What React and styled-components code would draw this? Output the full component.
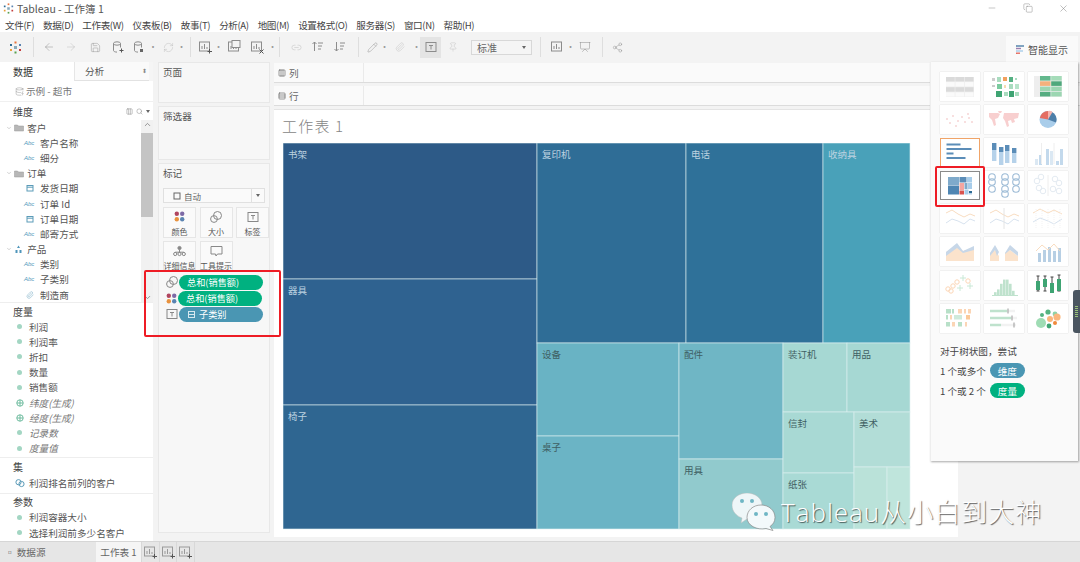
import React from 'react';
import styled, { createGlobalStyle, css } from 'styled-components';
import { ArrowLeft, ArrowRight, Save, DatabaseZap, RefreshCw, Pin, Share2, Presentation, Minus, Copy, X, ChevronDown, ChevronUp, Search, Paperclip, Pencil, Link2, Columns3, Rows3 } from 'lucide-react';

const FONT = `"Noto Sans CJK SC", "Noto Sans", sans-serif`;

const Global = createGlobalStyle`
  html, body { margin: 0; padding: 0; background: #fff; }
  * { box-sizing: border-box; }
  body { font-family: ${FONT}; font-size: 10px; color: #444; }
`;

const Page = styled.div`
  position: relative; width: 1080px; height: 562px; overflow: hidden;
  display: flex; flex-direction: column; background: #fff;
`;
const TitleBar = styled.div`
  height: 17px; display: flex; align-items: center; padding-left: 3px; gap: 3px; font-size: 10.5px; color: #555;
`;
const WinButtons = styled.div`
  margin-left: auto; display: flex; width: 93px; color: #777; justify-content: space-between; padding-right: 11px;
`;
const MenuBar = styled.div`
  height: 15px; display: flex; align-items: center; padding-left: 5px; gap: 9px; font-size: 9.6px; letter-spacing: -.4px; color: #444; white-space: nowrap;
`;
const Toolbar = styled.div`
  height: 30px; background: #f3f3f3; display: flex; align-items: center; padding-left: 4px;
`;
const Tool = styled.div`
  width: ${p => p.$w}px; height: 21px; flex: none; display: flex; align-items: center; justify-content: center; color: #8c8c8c;
  opacity: ${p => p.$dim ? .55 : 1};
  ${p => p.$on && css`background: #e4e4e4;`}
`;
const Sep = styled.div`width: 1px; height: 20px; background: #dedede; flex: none; margin: 0 ${p => p.$r ?? 8}px 0 ${p => p.$l ?? 8}px;`;
const Dot = styled.div`width: ${p => p.$w || 8}px; flex: none; text-align: center; font-size: 9px; color: #999; line-height: 10px;`;
const FitSelect = styled.div`
  width: 61px; height: 15px; flex: none; margin-left: 6px; border: 1px solid #d8d8d8; background: #f5f5f5; display: flex; align-items: center; justify-content: space-between; padding: 0 5px; font-size: 10px; color: #666;
`;
const Caret = styled.span`
  width: 0; height: 0; border-left: 2.5px solid transparent; border-right: 2.5px solid transparent; border-top: 3px solid #666; display: block;
`;

const Main = styled.div`flex: 1; min-height: 0; display: flex; background: #f3f3f3;`;
const Left = styled.div`width: 153px; flex: none; background: #fff; display: flex; flex-direction: column; overflow: hidden;`;
const Tabs = styled.div`height: 19px; display: flex; background: #f5f5f5; flex: none;`;
const TabA = styled.div`width: 74px; background: #fff; padding: 2px 0 0 13px; font-size: 10px; color: #333;`;
const TabB = styled.div`width: 75px; padding: 2px 2px 0 10px; font-size: 9.6px; color: #555; background: #fafafa; border-bottom: 1px solid #e2e2e2; border-left: 1px solid #e6e6e6; display: flex; justify-content: space-between;`;
const TinyArrows = styled.span`font-size: 6px; color: #888; line-height: 14px;`;
const Source = styled.div`height: 21px; flex: none; display: flex; align-items: center; padding-left: 15px; gap: 2px; color: #777; font-size: 9.6px; border-bottom: 1px solid #f0f0f0;`;
const SecHead = styled.div`
  height: ${p => p.$h}px; flex: none; display: flex; align-items: center; padding-left: 13px; font-size: 10px; color: #444;
`;
const HeadTools = styled.div`margin-left: auto; display: flex; align-items: center; gap: 3px; color: #999; padding-right: 3px;`;
const DimWrap = styled.div`height: 183px; flex: none; display: flex; border-bottom: 1px solid #eee;`;
const List = styled.div`flex: 1; min-width: 0; overflow: hidden;`;
const Scroll = styled.div`width: 12px; flex: none; background: #f1f1f1; display: flex; flex-direction: column; align-items: center; color: #777;`;
const Thumb = styled.div`width: 12px; height: 84px; background: #c4c4c4; margin-top: 4px; margin-bottom: auto;`;
const Row = styled.div`
  height: 15.2px; display: flex; align-items: center; padding-left: ${p => p.$pad}px; white-space: nowrap; font-size: 9.6px; color: #555;
  ${p => p.$it && css`font-style: italic; color: #777;`}
`;
const Slot = styled.span`width: ${p => p.$w}px; flex: none; display: flex; align-items: center; justify-content: center; color: ${p => p.$c || '#5b9bb8'};`;
const Abc = styled.span`font-size: 6px; color: #4f96bb; width: 16px; flex: none; font-family: "Liberation Sans", sans-serif; font-style: italic;`;
const MeasureDot = styled.span`width: 5px; height: 5px; border-radius: 50%; background: #a3d6c3; display: block;`;
const Divider = styled.div`height: 1px; background: #eee; flex: none; margin-top: ${p => p.$t || 0}px;`;

const Shelves = styled.div`width: 121px; flex: none; padding: 0 4px 0 5px; display: flex; flex-direction: column; gap: 3px;`;
const Card = styled.div`
  height: ${p => p.$h}px; background: #f7f7f7; border: 1px solid #e8e8e8; padding: 2px 4px; font-size: 9.6px; color: #555;
`;
const MarkSelect = styled.div`
  height: 15px; margin-top: 8px; border: 1px solid #e0e0e0; background: #fafafa; display: flex; align-items: center; padding-left: 9px; gap: 3px; font-size: 8.5px; color: #666;
`;
const MarkCaretBox = styled.div`margin-left: auto; width: 13px; height: 100%; border-left: 1px solid #e0e0e0; display: flex; align-items: center; justify-content: center;`;
const MarkGrid = styled.div`display: grid; grid-template-columns: repeat(3, 33px); column-gap: 3.5px; row-gap: 3px; margin-top: 4px;`;
const MarkBtn = styled.div`
  height: 31px; border: 1px solid #e6e6e6; background: #fafafa; display: flex; flex-direction: column; align-items: center; justify-content: space-between; padding: 3px 0 0; font-size: 8px; line-height: 10px; color: #555; white-space: nowrap;
  svg { color: #888; }
`;
const PillRows = styled.div`display: flex; flex-direction: column; gap: 1.5px; margin-top: 3px; padding-left: 3px;`;
const PillRow = styled.div`display: flex; align-items: center; gap: 1px; color: #888;`;
const Pill = styled.div`
  width: 84px; height: 14.5px; border-radius: 8px; background: ${p => p.$c}; color: #fff; font-size: 9.2px; display: flex; align-items: center; padding-left: ${p => p.$pad || 8}px; gap: 4px; white-space: nowrap;
  svg { color: #d6e8ef; }
`;

const Center = styled.div`flex: 1; min-width: 0; display: flex; flex-direction: column; padding: 1px 0 4px 0;`;
const Shelf = styled.div`
  height: 20px; flex: none; display: flex; background: #fafafa; border-bottom: 1px solid #dcdcdc; margin-bottom: 3px; font-size: 9.6px; color: #555;
`;
const ShelfLabel = styled.div`width: 90px; border-right: 1px solid #eaeaea; display: flex; align-items: center; padding-left: 4px; gap: 3px; color: #666;`;
const Sheet = styled.div`flex: 1; width: 684px; background: #fff; padding: 6px 0 0 8px; border-top: 1px solid #e4e4e4;`;
const SheetTitle = styled.div`font-size: 15px; line-height: 19px; color: #858585; letter-spacing: 1.2px; height: 27px; font-family: "Noto Sans CJK SC", "Liberation Serif", serif; font-weight: 300;`;
const Tree = styled.svg`display: block; margin-left: 1px;`;

const Bottom = styled.div`height: 21px; flex: none; background: #e6e6e6; border-top: 1px solid #d6d6d6; display: flex; align-items: center; font-size: 9.6px; color: #666;`;
const SourceTab = styled.div`width: 96px; padding-left: 5px; white-space: nowrap;`;
const SheetTab = styled.div`width: 45px; height: 100%; background: #f5f5f5; display: flex; align-items: center; justify-content: center; white-space: nowrap;`;
const NewTab = styled.div`width: 17.700px; height: 100%; border-left: 1px solid #d8d8d8; display: flex; align-items: center; justify-content: center; color: #999;`;

const ShowTab = styled.div`
  position: absolute; left: 1006px; top: 36px; width: 72px; height: 27px; background: #fafafa; display: flex; align-items: center; justify-content: center; gap: 3px; font-size: 10px; color: #555;
`;
const ShowPanel = styled.div`
  position: absolute; left: 930px; top: 62px; width: 148px; height: 399px; background: #fafafa; box-shadow: 1px 1px 2px rgba(0,0,0,.35); padding: 10px 0 0 9px; border-left: 1px solid #eee;
`;
const TileGrid = styled.div`display: grid; grid-template-columns: repeat(3, 40px); grid-auto-rows: 29px; column-gap: 4px; row-gap: 4.1px;`;
const Tile = styled.div`
  background: #fff; box-shadow: 0 0 1px rgba(0,0,0,.22); display: flex;
  svg { filter: blur(.35px); }
  ${p => p.$active && css`box-shadow: inset 0 0 0 1px #f0a468;`}
  ${p => p.$sel && css`box-shadow: inset 0 0 0 1px #8a8a8a;`}
`;
const Hint = styled.div`font-size: 9.6px; color: #444; height: 18px; display: flex; align-items: center; gap: 2px; white-space: nowrap;`;
const HintFirst = styled(Hint)`margin-top: 9px;`;
const HintPill = styled.span`
  width: 35px; height: 15px; border-radius: 8px; background: ${p => p.$c}; color: #fff; font-size: 9.6px; display: flex; align-items: center; justify-content: center; margin-left: 2px;
`;
const HintPlain = styled(Hint)`margin-top: 2px;`;

const RedBox = styled.div`
  position: absolute; left: ${p => p.$x}px; top: ${p => p.$y}px; width: ${p => p.$w}px; height: ${p => p.$h}px; border: 2px solid #ee1c25; border-radius: 2px; pointer-events: none;
`;
const Handle = styled.div`
  position: absolute; left: 1073px; top: 290px; width: 7px; height: 43px; background: #4a5560; border-radius: 3px 0 0 3px; display: flex; flex-direction: column; justify-content: center; align-items: center; gap: 1px;
`;
const HandleDot = styled.span`width: 3px; height: 1px; background: #9ac27a; display: block;`;
const Watermark = styled.div`
  position: absolute; left: 732px; top: 493px; display: flex; align-items: center; gap: 5px; color: #fff; font-size: 26px; line-height: 38px; height: 38px; white-space: nowrap; text-shadow: 1px 1px 1px rgba(0,0,0,.6); letter-spacing: 1px;
`;
const WmText = styled.span`font-family: "Open Sans", "Noto Sans CJK SC", sans-serif; font-weight: 300;`;

const S = ({ w = 12, h = 12, children, vb }) => (
  <svg width={w} height={h} viewBox={vb || `0 0 ${w} ${h}`} fill="none" stroke="currentColor" strokeWidth="1">{children}</svg>
);

const DbIcon = ({ mode }) => (
  <S w={14} h={14}>
    <ellipse cx="6" cy="3.5" rx="3.5" ry="1.7" />
    <path d="M2.5 3.5v7c0 .9 1.6 1.6 3.5 1.6M9.5 3.5v4" />
    {mode === 'plus' ? <path d="M10.5 8.5v4M8.5 10.5h4" stroke="#555" /> : <rect x="8" y="9" width="3" height="3" fill="#666" stroke="none" />}
  </S>
);
const ChartIcon = ({ mode }) => (
  <S w={15} h={14}>
    <rect x="1.5" y="2" width="10" height="9" />
    <path d="M4 9V6M6.5 9V4M9 9V7" />
    {mode === 'plus' && <path d="M11.5 9v4.5M9.5 11.5h4.5" stroke="#555" />}
    {mode === 'x' && <path d="M9.5 9.5l4 4M13.5 9.5l-4 4" stroke="#555" />}
    {mode === 'dup' && <rect x="5" y="0.5" width="8" height="7" fill="#f3f3f3" />}
  </S>
);
const LogoIcon = ({ size = 13 }) => {
  const c = ['#e8743b', '#5b84b1', '#c43e3e', '#59a14f', '#e8a13b', '#2f6c94'];
  const pts = [[6.5, 1.5], [11, 4], [11, 9], [6.5, 11.5], [2, 9], [2, 4]];
  return (
    <svg width={size} height={size} viewBox="0 0 13 13">
      {pts.map((p, i) => <rect key={i} x={p[0] - 1} y={p[1] - 1} width="2" height="2" fill={c[i]} />)}
      <rect x="5" y="5" width="3" height="3" fill="#8ab" />
    </svg>
  );
};
const SortIcon = ({ down }) => (
  <S w={14} h={14}>
    <path d={down ? 'M3.5 2v9M1.5 9l2 2 2-2' : 'M3.5 11V2M1.5 4l2-2 2 2'} />
    <path d="M7 3h5M7 6h4M7 9h3" />
  </S>
);
const ColorDots = () => (
  <svg width="11" height="11" viewBox="0 0 11 11">
    <circle cx="2.8" cy="2.8" r="2.2" fill="#b0455f" /><circle cx="8.2" cy="2.8" r="2.2" fill="#7d6aa6" />
    <circle cx="2.8" cy="8.2" r="2.2" fill="#e8923e" /><circle cx="8.2" cy="8.2" r="2.2" fill="#5b84b1" />
  </svg>
);
const SizeIcon = () => (
  <S w={12} h={12}><circle cx="4" cy="8" r="3.4" /><circle cx="7.5" cy="4.5" r="4" /></S>
);
const LabelIcon = () => (
  <S w={12} h={12}><rect x="1" y="1.5" width="10" height="9" /><path d="M4 4.5h4M6 4.5v4" /></S>
);
const DetailIcon = () => (
  <S w={13} h={12}><circle cx="6.5" cy="3" r="1.6" fill="currentColor" /><circle cx="2.2" cy="9" r="1.6" /><circle cx="6.5" cy="9" r="1.6" /><circle cx="10.8" cy="9" r="1.6" /><path d="M6.5 4.5v3M2.2 7.2h8.6" /></S>
);
const TipIcon = () => (
  <S w={13} h={12}><path d="M1 1.5h11v7.5H7.5L6 11 5.5 9H1z" /></S>
);
const CalIcon = () => (
  <S w={8} h={8}><rect x="1" y="1.5" width="6" height="5.5" /><path d="M1 3.2h6" /></S>
);
const GlobeIcon = () => (
  <svg width="8" height="8" viewBox="0 0 8 8" fill="none" stroke="#62b596" strokeWidth=".9"><circle cx="4" cy="4" r="3.2" /><path d="M.8 4h6.4M4 .8v6.4" /></svg>
);
const SetIcon = () => (
  <svg width="10" height="10" viewBox="0 0 10 10" fill="none" stroke="#5b9bb8"><circle cx="3.5" cy="4.2" r="2.6" /><circle cx="6.5" cy="6" r="2.6" /></svg>
);
const HierIcon = () => (
  <svg width="9" height="9" viewBox="0 0 9 9" fill="#4f96bb"><path d="M4.5 .5l1.5 2.5h-3zM1.5 5h2v3h-2zM5.5 5h2v3h-2z" /></svg>
);
const FolderIcon = () => (
  <svg width="10" height="9" viewBox="0 0 10 9" fill="#b7b7b7" stroke="#999" strokeWidth=".5"><path d="M.5 2h3l1 1h5v5h-9z" /></svg>
);

/* ----- show-me miniatures ----- */
const M = ({ children }) => <svg width="40" height="29" viewBox="0 0 40 29" fill="none">{children}</svg>;
const grid = (x0, y0, cols, rows, w, h, f) => {
  const out = [];
  for (let r = 0; r < rows; r++) for (let c = 0; c < cols; c++) {
    out.push(<rect key={`${r}-${c}`} x={x0 + c * (w + .7)} y={y0 + r * (h + .7)} width={w} height={h} fill={f(r, c)} />);
  }
  return out;
};
const LineChart = ({ split }) => (
  <>
    <path d="M6 9l6-3 6 4 6 3 6-3 5 2" stroke="#f8dcc0" />
    <path d="M6 19l6-4 6 2 6 3 6-5 5 2" stroke="#d7e2ee" />
    {split && <path d="M20 4v21" stroke="#e4e4e4" />}
  </>
);
const heat = [[8, 6, 3, 3, '#ccc'], [13, 5, 4, 5, '#a9dcbf'], [19, 5, 4, 4, '#f2a05d'], [25, 5, 4, 5, '#55b083'], [31, 6, 2, 2, '#a9dcbf'],
  [8, 13, 3, 2, '#ccc'], [13, 12, 5, 5, '#7bcb9f'], [20, 13, 2, 3, '#f8dcb0'], [25, 12, 4, 5, '#a9dcbf'], [31, 12, 4, 5, '#b9e4cb'],
  [12, 19, 6, 6, '#3fa473'], [20, 20, 4, 4, '#a9dcbf'], [25, 19, 5, 6, '#3fa473'], [31, 20, 4, 4, '#a9dcbf']];
const tiles = [
  <M key="a"><rect x="6" y="5" width="28" height="20" fill="#eee" />{grid(6, 5, 3, 4, 8.7, 4.4, (r) => (r % 2 ? '#fafafa' : '#dadada'))}</M>,
  <M key="b">{heat.map((h, i) => <rect key={i} x={h[0]} y={h[1]} width={h[2]} height={h[3]} fill={h[4]} />)}</M>,
  <M key="c"><rect x="6" y="4" width="28" height="21" fill="#eee" />{grid(12, 4, 2, 4, 10.5, 4.6, (r, c) => ['#63b88d', '#a5dcb9', '#f4b17d', '#4fa87c', '#9cd6b2', '#9cd6b2', '#55ad81', '#9cd6b2'][r * 2 + c])}</M>,
  <M key="d">{[[7,14],[10,18],[13,11],[18,16],[22,12],[25,17],[29,13],[32,17],[28,9],[16,21]].map((p, i) => <circle key={i} cx={p[0]} cy={p[1]} r="1" fill="#f6d4d4" />)}</M>,
  <M key="e"><path d="M5 8h9l2 1-2 4-3 1 1 6-2 1-2-6-3-3zM20 8h15l-1 5-4 1 1 3-3 1-1-3-3 1 1 5-2 1-2-6-2-3zM14 6h4l-1 2h-2z" fill="#f8cfcf" /></M>,
  <M key="f"><circle cx="20" cy="14.5" r="8.5" fill="#a9cdea" /><path d="M20 14.5V6a8.5 8.5 0 0 1 8 11.5z" fill="#4d7ea8" /><path d="M20 14.5V6a8.5 8.5 0 0 0-8.2 7z" fill="#e46d62" /><path d="M20 6a5 5 0 0 1 4.5 1L20 14.5z" fill="#f5b3ad" /></M>,
  <M key="g"><path d="M6.500 6.500h14M6.500 11h25M6.500 15.500h7M6.500 20h19" stroke="#5b8db8" strokeWidth="2" /></M>,
  <M key="h">{[[8,5,7,11],[15,9,5,13],[21,7,6,12],[28,10,5,10]].map((b, i) => <g key={i}><rect x={b[0]} y={b[1]} width="4.4" height={b[2]} fill="#5b8db8" /><rect x={b[0]} y={b[1] + b[2]} width="4.4" height={b[3]} fill="#b6d2ea" /></g>)}</M>,
  <M key="i">{[[7,18],[11,14],[18,8],[22,10],[28,20],[32,8]].map((b, i) => <rect key={i} x={b[0]} y={b[1] + 3} width="3" height={24 - b[1]} fill={i % 3 ? '#c3d9ec' : '#dbe8f3'} />)}<path d="M13.500 5v21M26 5v21" stroke="#eee" /></M>,
  <M key="j"><rect x="8" y="6" width="11" height="8" fill="#7faacb" /><rect x="8" y="14.500" width="11" height="9" fill="#4f86b3" /><rect x="19.500" y="6" width="7" height="5.500" fill="#5b8db8" /><rect x="27" y="6" width="5" height="5.500" fill="#a8cdea" /><rect x="19.500" y="12" width="4.500" height="7" fill="#f4a5a0" /><rect x="19.500" y="19.500" width="4.500" height="4" fill="#d9534f" /><rect x="24.500" y="12" width="3" height="6" fill="#7faacb" /><rect x="28" y="12" width="4" height="6" fill="#a8cdea" /><rect x="24.500" y="18.500" width="4" height="5" fill="#a8cdea" /><rect x="29" y="20" width="3" height="2" fill="#2f6c94" /><rect x="29" y="22" width="3" height="1.500" fill="#b6d2ea" /></M>,
  <M key="k"><g stroke="#9dbbd6" fill="none" strokeWidth="1.1">{[[11,7],[11,12],[24,7],[24,12],[35,7],[35,12],[11,19],[24,19],[24,24],[35,19]].map((p, i) => <circle key={i} cx={p[0] - 3} cy={p[1] - 1} r="3.3" />)}</g></M>,
  <M key="l"><g stroke="#e3eaf1" fill="none">{[[9,10],[13,6],[11,17],[15,20],[27,8],[31,12],[25,18],[31,20]].map((p, i) => <circle key={i} cx={p[0]} cy={p[1]} r="2.8" />)}</g><path d="M20 4v21" stroke="#eee" /></M>,
  <M key="m"><LineChart /></M>,
  <M key="n"><LineChart split /></M>,
  <M key="o"><path d="M5 9l7-4 8 4 6-3 8 4" stroke="#f8dcc0" /><path d="M5 18l7-4 8 3 6 3 8-5" stroke="#d7e2ee" /><path d="M8 5v20M14 5v20M20 5v20M26 5v20M32 5v20" stroke="#f3f3f3" strokeDasharray="1 1" /></M>,
  <M key="p"><path d="M6 24V15l11-6 6 5 11-3v13z" fill="#fbe3cc" /><path d="M6 15l11-9 6 8 11-5v4l-11 3-6-5L6 19z" fill="#c7d7e8" /></M>,
  <M key="q"><path d="M6 24v-8l5-3 4 6v5zM21 24v-8l5-3 8 6v5z" fill="#fbe3cc" /><path d="M6 16l5-8 4 7-2 4-2-6-5 6zM21 16l5-8 8 7v4l-8-6-5 4z" fill="#c7d7e8" /></M>,
  <M key="r">{[[10,16],[15,13],[20,10],[25,14],[30,11]].map((b, i) => <rect key={i} x={b[0]} y={b[1]} width="3" height={25 - b[1]} fill="#b7cfe4" />)}<path d="M8 14l6-6 6 5 6-6 6 7" stroke="#f8dcc0" /></M>,
  <M key="s"><g stroke="#fbd5b5" fill="none">{[[8,18],[13,15],[11,20],[17,11],[28,10]].map((p, i) => <circle key={i} cx={p[0]} cy={p[1]} r="2.2" />)}</g><g stroke="#c9e8d6"><path d="M23 4v6M20 7h6M30 12v6M27 15h6M20 14v6M17 17h6" /></g></M>,
  <M key="t">{[[10,2],[13,4],[16,8],[19,11],[22,11],[25,8],[28,3]].map((b, i) => <rect key={i} x={b[0]} y={24 - b[1] * 1.4} width="2.6" height={b[1] * 1.4} fill="#bfe2cd" />)}<path d="M8 24.500h26" stroke="#bfe2cd" /></M>,
  <M key="u">{[[10,5,20,10,9],[17,5,20,8,8],[24,6,21,12,10],[31,4,20,8,12]].map((b, i) => <g key={i}><path d={`M${b[0]} ${b[1]}V${b[2]}M${b[0]-1.5} ${b[1]}h3M${b[0]-1.5} ${b[2]}h3`} stroke="#444" /><rect x={b[0]-2} y={b[3]} width="4" height={b[4]} fill="#3fa473" /></g>)}</M>,
  <M key="v">{[[6,5,5,'#b8e0c8'],[12,5,2,'#b8e0c8'],[18,5,4,'#fbd5b5'],[24,5,2,'#fbd5b5'],[28,5,3,'#fbd5b5'],[6,11,2,'#b8e0c8'],[10,11,2,'#fbd5b5'],[14,11,8,'#cfeadb'],[26,11,4,'#fbc99a'],[6,18,4,'#b8e0c8'],[12,18,3,'#fbd5b5'],[18,18,4,'#b8e0c8'],[25,18,2,'#fbd5b5']].map((r, i) => <rect key={i} x={r[0]} y={r[1]} width={r[2]} height="4.5" fill={r[3]} />)}</M>,
  <M key="w"><path d="M6 7h17M6 14h21M6 21h11" stroke="#bfe2cd" strokeWidth="2.4" /><path d="M23 7h8M27 14h6M17 21h15" stroke="#f2f2f2" strokeWidth="2.4" /><path d="M24 4.500v5M28 11.500v5M30 18.500v5" stroke="#999" /></M>,
  <M key="x"><circle cx="13" cy="19" r="5" fill="#9fdcb4" /><circle cx="14" cy="11" r="2" fill="#56b381" /><circle cx="20" cy="8" r="2.6" fill="#56b381" /><circle cx="27" cy="10" r="2.4" fill="#8fd3a8" /><circle cx="22" cy="15" r="3" fill="#fbb77d" /><circle cx="29" cy="13" r="3.6" fill="#fbb77d" /><circle cx="27" cy="19" r="2" fill="#f08a3c" /><circle cx="21" cy="22" r="2.4" fill="#3fa473" /></M>,
];

const treemap = [
  ['书架', 283, 143, 254, 136, '#2d5a87'], ['器具', 283, 279, 254, 126, '#2f6290'], ['椅子', 283, 405, 254, 124, '#2f6691'],
  ['复印机', 537, 143, 149, 200, '#2f6d96'], ['电话', 686, 143, 137, 200, '#2f7199'], ['收纳具', 823, 143, 87, 200, '#49a1b9'],
  ['设备', 537, 343, 142, 93, '#69b3c4'], ['桌子', 537, 436, 142, 93, '#6bb4c5'], ['配件', 679, 343, 104, 116, '#6fb6c5'],
  ['用具', 679, 459, 104, 70, '#91cacd'], ['装订机', 783, 343, 64, 69, '#a6d8d3'], ['用品', 847, 343, 63, 69, '#a6d8d3'],
  ['信封', 783, 412, 71, 61, '#a8d9d4'], ['纸张', 783, 473, 71, 56, '#a9dad5'], ['美术', 854, 412, 56, 55, '#b2ddd7'],
  ['', 854, 467, 33, 62, '#bae2d9'], ['', 887, 467, 23, 62, '#bfe5dc'],
];

const menus = ['文件(F)', '数据(D)', '工作表(W)', '仪表板(B)', '故事(T)', '分析(A)', '地图(M)', '设置格式(O)', '服务器(S)', '窗口(N)', '帮助(H)'];

const Field = ({ t, kind }) => (
  <Row $pad={24}>
    {kind === 'abc' && <Abc>Abc</Abc>}
    {kind === 'cal' && <Slot $w={11}><CalIcon /></Slot>}
    {kind === 'cal' && <Slot $w={5} />}
    {kind === 'link' && <Slot $w={11}><Paperclip size={8} strokeWidth={1.2} /></Slot>}
    {kind === 'link' && <Slot $w={5} />}
    {t}
  </Row>
);
const Group = ({ t, hier }) => (
  <Row $pad={6}>
    <Slot $w={6} $c="#888"><ChevronDown size={6} strokeWidth={1.5} /></Slot>
    <Slot $w={13}>{hier ? <HierIcon /> : <FolderIcon />}</Slot>
    <span>&nbsp;{t}</span>
  </Row>
);
const Measure = ({ t, it, globe, set }) => (
  <Row $pad={14} $it={it}>
    <Slot $w={11}>{globe ? <GlobeIcon /> : set ? <SetIcon /> : <MeasureDot />}</Slot>
    <Slot $w={4} />
    {t}
  </Row>
);

export default function App() {
  return (
    <Page>
      <Global />
      <TitleBar>
        <LogoIcon size={11} />
        <span>Tableau - 工作簿 1</span>
        <WinButtons>
          <Minus size={10} strokeWidth={1} />
          <Copy size={10} strokeWidth={1} />
          <X size={11} strokeWidth={1} />
        </WinButtons>
      </TitleBar>
      <MenuBar>{menus.map(m => <span key={m}>{m}</span>)}</MenuBar>
      <Toolbar>
        <Tool $w={22}><LogoIcon /></Tool>
        <Sep $l={7} $r={7} />
        <Tool $w={16}><ArrowLeft size={12} strokeWidth={1} /></Tool>
        <Tool $w={28} $dim><ArrowRight size={12} strokeWidth={1} /></Tool>
        <Tool $w={20}><Save size={11} strokeWidth={1} /></Tool>
        <Tool $w={26}><DbIcon mode="plus" /></Tool>
        <Tool $w={16}><DbIcon /></Tool>
        <Dot $w={12}>•</Dot>
        <Tool $w={18} $dim><RefreshCw size={11} strokeWidth={1} /></Tool>
        <Dot>•</Dot>
        <Sep $l={5} $r={5} />
        <Tool $w={18}><ChartIcon mode="plus" /></Tool>
        <Dot>•</Dot>
        <Tool $w={24}><ChartIcon mode="dup" /></Tool>
        <Tool $w={22}><ChartIcon mode="x" /></Tool>
        <Dot>•</Dot>
        <Sep $l={3} $r={7} />
        <Tool $w={18} $dim><Link2 size={11} strokeWidth={1} /></Tool>
        <Tool $w={26}><SortIcon /></Tool>
        <Tool $w={18}><SortIcon down /></Tool>
        <Sep $l={9} $r={5} />
        <Tool $w={16}><Pencil size={11} strokeWidth={1} /></Tool>
        <Dot>•</Dot>
        <Tool $w={24} $dim><Paperclip size={10} strokeWidth={1} /></Tool>
        <Dot>•</Dot>
        <Tool $w={21} $on><LabelIcon /></Tool>
        <Tool $w={24} $dim><Pin size={10} strokeWidth={1} /></Tool>
        <FitSelect>标准<Caret /></FitSelect>
        <Sep $l={8} $r={7} />
        <Tool $w={18}><ChartIcon /></Tool>
        <Dot>•</Dot>
        <Tool $w={22}><Presentation size={12} strokeWidth={1} /></Tool>
        <Sep $l={6} $r={6} />
        <Tool $w={16}><Share2 size={11} strokeWidth={1} /></Tool>
      </Toolbar>
      <Main>
        <Left>
          <Tabs>
            <TabA>数据</TabA>
            <TabB>分析<TinyArrows>⬍</TinyArrows></TabB>
          </Tabs>
          <Source><DatabaseZap size={9} strokeWidth={1} />示例 - 超市</Source>
          <SecHead $h={18}>维度<HeadTools><Columns3 size={7} /><Search size={7} /><Caret /></HeadTools></SecHead>
          <DimWrap>
            <List>
              <Group t="客户" />
              <Field t="客户名称" kind="abc" />
              <Field t="细分" kind="abc" />
              <Group t="订单" />
              <Field t="发货日期" kind="cal" />
              <Field t="订单 Id" kind="abc" />
              <Field t="订单日期" kind="cal" />
              <Field t="邮寄方式" kind="abc" />
              <Group t="产品" hier />
              <Field t="类别" kind="abc" />
              <Field t="子类别" kind="abc" />
              <Field t="制造商" kind="link" />
            </List>
            <Scroll>
              <ChevronUp size={9} />
              <Thumb />
              <ChevronDown size={9} />
            </Scroll>
          </DimWrap>
          <SecHead $h={16}>度量</SecHead>
          <Measure t="利润" />
          <Measure t="利润率" />
          <Measure t="折扣" />
          <Measure t="数量" />
          <Measure t="销售额" />
          <Measure t="纬度(生成)" it globe />
          <Measure t="经度(生成)" it globe />
          <Measure t="记录数" it />
          <Measure t="度量值" it />
          <Divider $t={1} />
          <SecHead $h={18}>集</SecHead>
          <Measure t="利润排名前列的客户" set />
          <Divider $t={2} />
          <SecHead $h={16}>参数</SecHead>
          <Measure t="利润容器大小" />
          <Measure t="选择利润前多少名客户" />
        </Left>
        <Shelves>
          <Card $h={41}>页面</Card>
          <Card $h={54}>筛选器</Card>
          <Card $h={370}>
            标记
            <MarkSelect><S w={8} h={8}><rect x="1" y="1" width="6" height="6" /></S>自动<MarkCaretBox><Caret /></MarkCaretBox></MarkSelect>
            <MarkGrid>
              <MarkBtn><ColorDots />颜色</MarkBtn>
              <MarkBtn><SizeIcon />大小</MarkBtn>
              <MarkBtn><LabelIcon />标签</MarkBtn>
              <MarkBtn><DetailIcon />详细信息</MarkBtn>
              <MarkBtn><TipIcon />工具提示</MarkBtn>
            </MarkGrid>
            <PillRows>
              <PillRow><SizeIcon /><Pill $c="#00b180">总和(销售额)</Pill></PillRow>
              <PillRow><ColorDots /><Pill $c="#00b180">总和(销售额)</Pill></PillRow>
              <PillRow><LabelIcon /><Pill $c="#4a96b3" $pad={9}><S w={7} h={7}><rect x=".5" y=".5" width="6" height="6" /><path d="M.5 3.500h6" /></S>子类别</Pill></PillRow>
            </PillRows>
          </Card>
        </Shelves>
        <Center>
          <Shelf><ShelfLabel><Columns3 size={8} />列</ShelfLabel></Shelf>
          <Shelf><ShelfLabel><Rows3 size={8} />行</ShelfLabel></Shelf>
          <Sheet>
            <SheetTitle>工作表 1</SheetTitle>
            <Tree width="628" height="387" viewBox="283 143 628 387">
              {treemap.map(([t, x, y, w, h, c], i) => (
                <g key={i}>
                  <rect x={x} y={y} width={w} height={h} fill={c} stroke="#dff0f0" strokeOpacity=".75" strokeWidth=".8" />
                  <text x={x + 5} y={y + 15} fontSize="9.5" fontFamily={FONT} fill={i < 6 ? '#bcd2e0' : '#3f5f63'}>{t}</text>
                </g>
              ))}
            </Tree>
          </Sheet>
        </Center>
      </Main>
      <Bottom>
        <SourceTab>▫ 数据源</SourceTab>
        <SheetTab>工作表 1</SheetTab>
        <NewTab><ChartIcon mode="plus" /></NewTab>
        <NewTab><ChartIcon mode="plus" /></NewTab>
        <NewTab><ChartIcon mode="plus" /></NewTab>
        <NewTab />
      </Bottom>

      <ShowTab>
        <svg width="9" height="9" viewBox="0 0 9 9"><path d="M0 1h8" stroke="#4d7ea8" strokeWidth="1.4" /><path d="M0 3.500h5" stroke="#9b7fb0" strokeWidth="1.4" /><path d="M0 6h7" stroke="#a8cdea" strokeWidth="1.4" /><path d="M0 8.200h4" stroke="#e46d62" strokeWidth="1.4" /></svg>
        智能显示
      </ShowTab>
      <ShowPanel>
        <TileGrid>
          {tiles.map((t, i) => <Tile key={i} $active={i === 6} $sel={i === 9}>{t}</Tile>)}
        </TileGrid>
        <HintFirst>对于树状图，尝试</HintFirst>
        <HintPlain>1 个或多个<HintPill $c="#4a96b3">维度</HintPill></HintPlain>
        <HintPlain>1 个或 2 个<HintPill $c="#00b180">度量</HintPill></HintPlain>
      </ShowPanel>
      <RedBox $x={144} $y={270} $w={137} $h={67} />
      <RedBox $x={935} $y={166} $w={50} $h={41} />
      <Handle>{[0,1,2,3,4,5].map(i => <HandleDot key={i} />)}</Handle>
      <Watermark>
        <svg width="44" height="38" viewBox="0 0 44 38">
          <path d="M15 0c8 0 15 5 15 12 0 1-.2 2-.5 3-6 0-12 5-12 11h-2.500l-6 4 1-5C4 23 0 18 0 12 0 5 7 0 15 0z" fill="#eef6f8" stroke="#bbb" strokeWidth=".5" />
          <path d="M29 12c8 0 14 5.500 14 12.500 0 4-2 7-5 9l3 4-7-2c-9 2-19-3-19-11C15 17.500 21 12 29 12z" fill="#f3f9fb" stroke="#888" strokeWidth=".7" />
          <circle cx="10" cy="8" r="2" fill="#6fb6c5" /><circle cx="20" cy="8" r="2" fill="#6fb6c5" />
          <circle cx="24" cy="21" r="2" fill="#6fb6c5" /><circle cx="34" cy="21" r="2" fill="#6fb6c5" />
        </svg>
        <WmText>Tableau从小白到大神</WmText>
      </Watermark>
    </Page>
  );
}
